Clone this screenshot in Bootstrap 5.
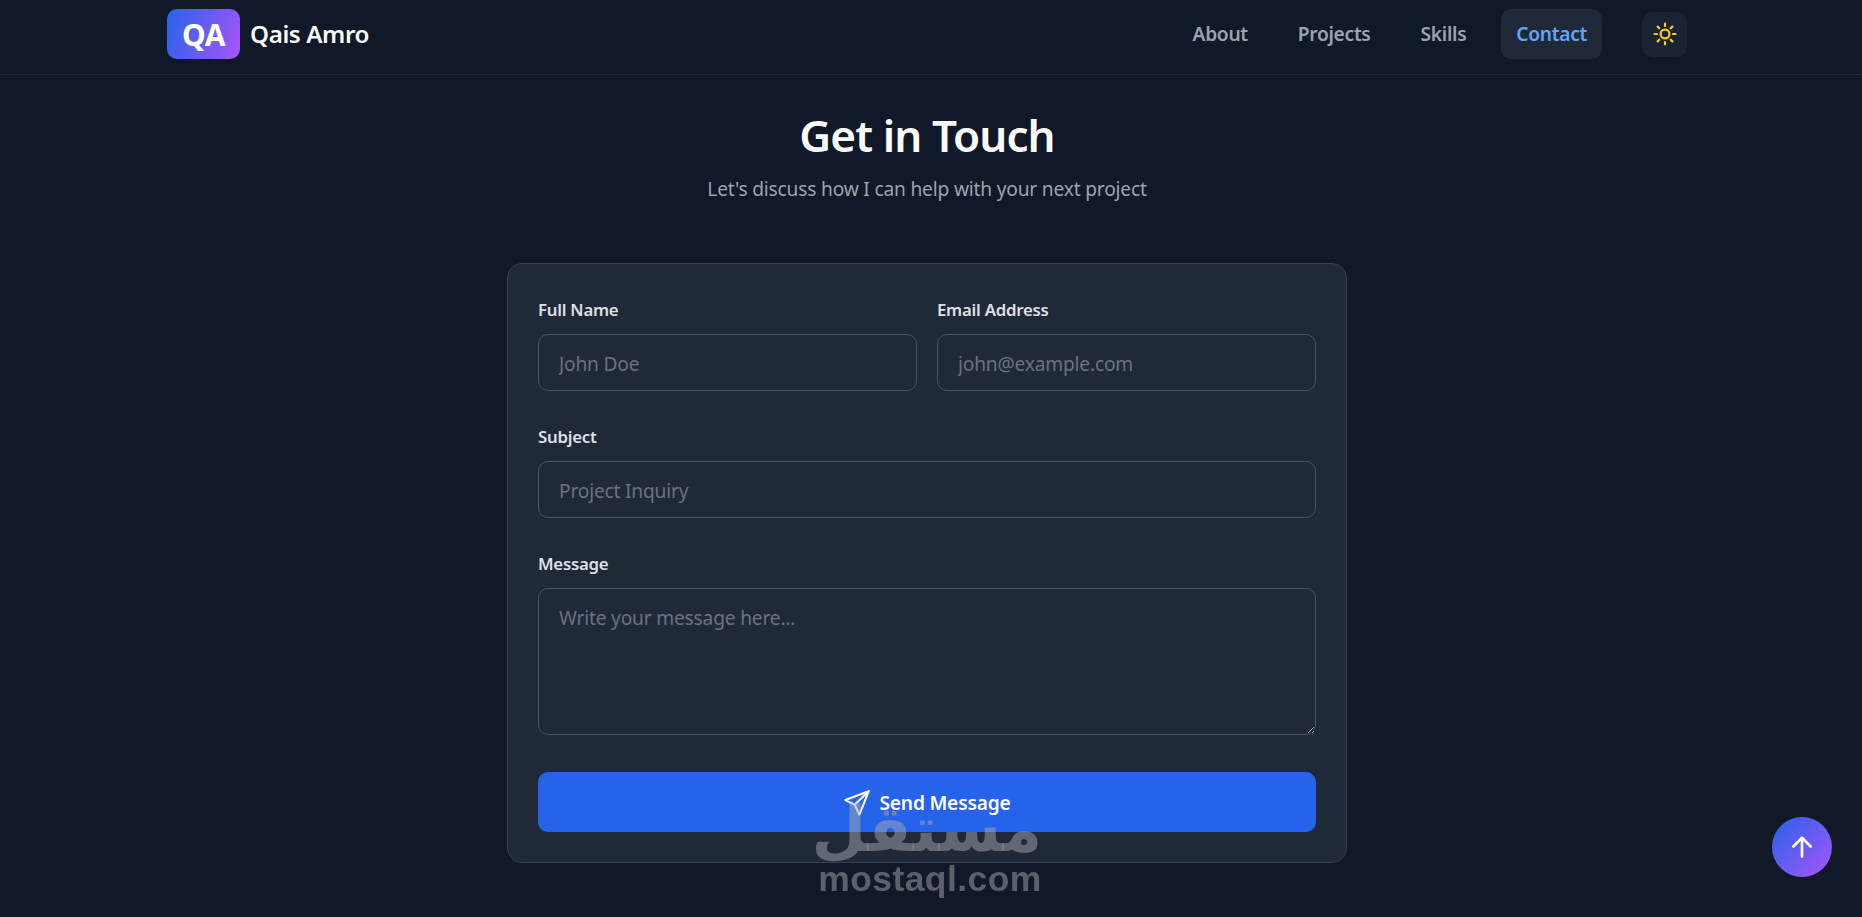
<!DOCTYPE html>
<html lang="en">
<head>
  <meta charset="UTF-8">
  <meta name="viewport" content="width=device-width, initial-scale=1.0">
  <title>Qais Amro - Contact</title>
  <link href="https://cdn.jsdelivr.net/npm/bootstrap@5.3.0/dist/css/bootstrap.min.css" rel="stylesheet">
  <style>
    body { background: #111827; font-family: "Noto Sans", "Open Sans", sans-serif; color: #f9fafb; min-height: 917px; padding-right: 8px; overflow: hidden; }
    .site-nav { height: 75px; padding: 9px 8px 0 0; border-bottom: 1px solid #1f2937; margin-right: -8px; }
    .site-wrap { width: 1520px; margin: 0 auto; height: 50px; }
    .logo-box { width: 73px; height: 50px; border-radius: 10px; background: linear-gradient(110deg, #2563eb, #a855f7); font-size: 30px; font-weight: 700; color: #fff; letter-spacing: -0.5px; }
    .brand-name { font-size: 24.2px; font-weight: 600; color: #f9fafb; letter-spacing: -0.4px; margin-left: 2px; padding-top: 1px; }
    .site-link { height: 50px; padding: 1px 15px 0; border-radius: 10px; font-size: 19.2px; font-weight: 600; color: #9ca3af; letter-spacing: -0.3px; text-decoration: none; }
    .site-link.current { background: #1f2937; color: #60a5fa; }
    .links-gap { gap: 20px; }
    .theme-btn { width: 45px; height: 45px; border: 0; padding: 0; border-radius: 10px; background: #1a2332; margin-left: 40px; }
    .page-title { font-size: 44px; font-weight: 600; margin: 0; line-height: 58px; color: #f9fafb; letter-spacing: -0.9px; }
    .page-sub { font-size: 19.2px; color: #9ca3af; margin: 11px 0 0; line-height: 27px; letter-spacing: -0.2px; }
    .title-block { padding-top: 31px; margin-bottom: 61px; }
    .form-box { width: 840px; height: 600px; padding: 33px 30px 0; background: #1f2937; border: 1px solid #374151; border-radius: 15px; }
    .form-box .form-label { font-size: 16.8px; font-weight: 600; color: #dde1e7; margin-bottom: 11px; line-height: 26px; letter-spacing: -0.25px; display: block; }
    .form-box .form-control { height: 57px; background: #1f2937; border: 1px solid #4b5563; border-radius: 10px; color: #f9fafb; font-size: 19.2px; padding: 13px 20px 11px; font-family: inherit; letter-spacing: -0.2px; }
    .form-box textarea.form-control { height: 147px; padding-top: 15px; }
    .form-box .form-control::placeholder { color: #6b7280; opacity: 1; }
    .field-gap { margin-bottom: 33px; }
    .pair-gap { gap: 20px; }
    .pair-gap > div { flex: 1 1 0; }
    .send-btn { height: 60px; background: #2563eb; border: 0; border-radius: 10px; color: #fff; font-size: 19.2px; font-weight: 600; margin-top: 37px; padding-top: 8px; letter-spacing: -0.2px; }
    .top-btn { position: fixed; right: 30px; bottom: 40px; width: 60px; height: 60px; border: 0; padding: 0; border-radius: 50%; background: linear-gradient(135deg, #2563eb, #a855f7); }
    .mark-stamp { position: fixed; left: 818px; top: 797px; width: 224px; text-align: center; color: rgba(165, 168, 175, 0.5); pointer-events: none; }
    .mark-ar { font-family: "DejaVu Sans", sans-serif; font-weight: 700; font-size: 63px; line-height: 66px; }
    .mark-en { font-family: "Liberation Sans", sans-serif; font-weight: 700; font-size: 35.5px; line-height: 40px; letter-spacing: 0.4px; margin-top: -4px; }
  </style>
</head>
<body>
  <nav class="navbar align-items-start site-nav">
    <div class="site-wrap d-flex align-items-center justify-content-between">
      <a href="#" class="d-flex align-items-center gap-2 text-decoration-none">
        <span class="logo-box d-flex align-items-center justify-content-center">QA</span>
        <span class="brand-name">Qais Amro</span>
      </a>
      <div class="d-flex align-items-center">
        <div class="d-flex align-items-center links-gap">
          <a href="#" class="site-link d-flex align-items-center">About</a>
          <a href="#" class="site-link d-flex align-items-center">Projects</a>
          <a href="#" class="site-link d-flex align-items-center">Skills</a>
          <a href="#" class="site-link current d-flex align-items-center">Contact</a>
        </div>
        <button type="button" class="theme-btn d-flex align-items-center justify-content-center" aria-label="Theme">
          <svg width="24" height="24" viewBox="0 0 24 24" fill="none" stroke="#facc15" stroke-width="2.2" stroke-linecap="round"><circle cx="12" cy="12" r="4.4"/><path d="M12 1.5v2.5M12 20v2.5M1.5 12H4M20 12h2.5M4.6 4.6l1.7 1.7M17.7 17.7l1.7 1.7M4.6 19.4l1.7-1.7M17.7 6.3l1.7-1.7"/></svg>
        </button>
      </div>
    </div>
  </nav>

  <main class="d-flex flex-column align-items-center">
    <div class="title-block text-center">
      <h1 class="page-title">Get in Touch</h1>
      <p class="page-sub">Let's discuss how I can help with your next project</p>
    </div>
    <form class="form-box" onsubmit="return false">
      <div class="d-flex pair-gap field-gap">
        <div>
          <label class="form-label" for="fullName">Full Name</label>
          <input class="form-control" id="fullName" type="text" placeholder="John Doe">
        </div>
        <div>
          <label class="form-label" for="emailAddr">Email Address</label>
          <input class="form-control" id="emailAddr" type="email" placeholder="john@example.com">
        </div>
      </div>
      <div class="field-gap">
        <label class="form-label" for="subjectLine">Subject</label>
        <input class="form-control" id="subjectLine" type="text" placeholder="Project Inquiry">
      </div>
      <div>
        <label class="form-label" for="msgBody">Message</label>
        <textarea class="form-control" id="msgBody" placeholder="Write your message here..."></textarea>
      </div>
      <button type="submit" class="btn send-btn w-100 d-flex align-items-center justify-content-center gap-2">
        <svg width="28" height="28" viewBox="0 0 24 24" fill="none" stroke="#fff" stroke-width="1.8" stroke-linecap="round" stroke-linejoin="round"><path d="M22 2 2 9.5l8 4 4 8.5z"/><path d="M22 2 10 13.5"/></svg>
        <span>Send Message</span>
      </button>
    </form>
  </main>

  <div class="mark-stamp">
    <div class="mark-ar" dir="rtl" lang="ar">مستقل</div>
    <div class="mark-en">mostaql.com</div>
  </div>

  <button type="button" class="top-btn d-flex align-items-center justify-content-center" aria-label="Back to top">
    <svg width="26" height="26" viewBox="0 0 24 24" fill="none" stroke="#fff" stroke-width="2.4" stroke-linecap="round" stroke-linejoin="round"><path d="M12 21V4M4 11.5 12 3.5l8 8"/></svg>
  </button>
  <script src="https://cdn.jsdelivr.net/npm/bootstrap@5.3.0/dist/js/bootstrap.bundle.min.js"></script>
</body>
</html>
